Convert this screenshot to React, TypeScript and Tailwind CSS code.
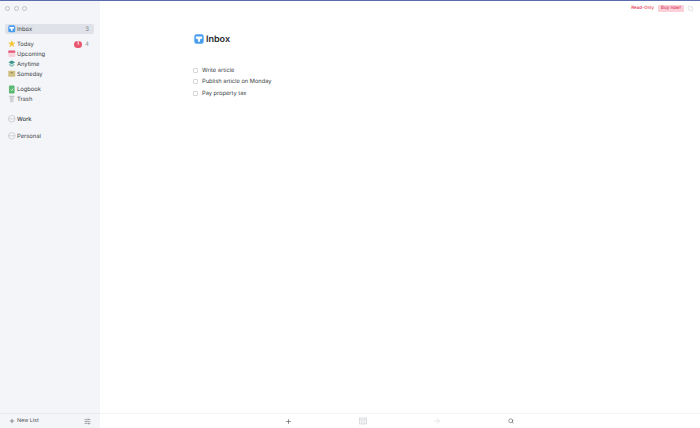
import { ArrowRight, Plus, Search, SlidersHorizontal } from 'lucide-react';

const FONT = "font-['Inter','Liberation_Sans',sans-serif]";

function InboxIcon({ size = 7.5 }: { size?: number }) {
  return (
    <svg width={size} height={size} viewBox="0 0 16 16" className="shrink-0">
      <rect x="0.5" y="0.5" width="15" height="15" rx="3.5" fill="#4a9ef0" />
      <path d="M3 4h10v3.5h-2.6L9.5 10v2.5h-3V10L5.6 7.5H3z" fill="#fff" />
    </svg>
  );
}

function TodayIcon() {
  return (
    <svg width="7.500" height="7.500" viewBox="0 0 16 16" className="shrink-0">
      <path d="M8 0.500l2.300 4.900 5.200.7-3.800 3.600 1 5.300L8 12.400l-4.700 2.600 1-5.300L.5 6.100l5.200-.7z" fill="#f6c944" />
    </svg>
  );
}

function UpcomingIcon() {
  return (
    <svg width="7.500" height="7.500" viewBox="0 0 16 16" className="shrink-0">
      <rect x="0.500" y="1" width="15" height="14" rx="2" fill="#f7d3dc" />
      <path d="M0.500 3a2 2 0 0 1 2-2h11a2 2 0 0 1 2 2v3h-15z" fill="#e8587a" />
    </svg>
  );
}

function AnytimeIcon() {
  return (
    <svg width="7.500" height="7.500" viewBox="0 0 16 16" className="shrink-0">
      <path d="M8 1l7 4-7 4-7-4z" fill="#3b958a" />
      <path d="M2.500 7.500L8 10.600l5.500-3.100V11L8 15l-5.500-4z" fill="#8cc4bc" />
    </svg>
  );
}

function SomedayIcon() {
  return (
    <svg width="7.500" height="7.500" viewBox="0 0 16 16" className="shrink-0">
      <rect x="0.500" y="1.500" width="15" height="13" rx="1.500" fill="#d0c184" />
      <rect x="5" y="5" width="6" height="1.800" rx="0.900" fill="#8f8350" />
    </svg>
  );
}

function LogbookIcon() {
  return (
    <svg width="7.500" height="9" viewBox="0 0 16 18" className="shrink-0">
      <rect x="2" y="0.500" width="12" height="17" rx="2" fill="#5bb872" />
      <path d="M5.500 9.500l2 2 3.500-4.500" stroke="#fff" strokeWidth="1.500" fill="none" />
    </svg>
  );
}

function TrashIcon() {
  return (
    <svg width="7.500" height="7.500" viewBox="0 0 16 16" className="shrink-0">
      <rect x="2" y="1.500" width="12" height="2.500" rx="1" fill="#c2c5c9" />
      <path d="M3.500 4.500h9l-1 11h-7z" fill="#d0d2d6" />
    </svg>
  );
}

function AreaIcon() {
  return (
    <svg width="7.500" height="7.500" viewBox="0 0 16 16" className="shrink-0">
      <circle cx="8" cy="8" r="7" fill="none" stroke="#b0b3b8" strokeWidth="1.100" />
      <path d="M1.500 8h13" stroke="#b0b3b8" strokeWidth="1.100" />
    </svg>
  );
}

function CalendarBox() {
  return (
    <svg width="8" height="8" viewBox="0 0 16 16">
      <rect x="1" y="2" width="14" height="12" fill="#f5f6f7" stroke="#c4c7ca" strokeWidth="1.100" />
      <path d="M1 5.500h14M5.500 5.500V14M10.500 5.500V14" stroke="#d4d6d9" strokeWidth="1" />
    </svg>
  );
}

function SidebarRow({ icon, label, active, badge, count, weight }: {
  icon: React.ReactNode;
  label: string;
  active?: boolean;
  badge?: string;
  count?: string;
  weight?: string;
}) {
  return (
    <div className={`flex h-[10px] items-center rounded-[2px] pl-[3px] pr-[5px] ${active ? 'bg-[#dfe2e8]' : ''}`}>
      <div className="flex w-[8px] justify-start">{icon}</div>
      <span className={`ml-[1px] mt-[1px] text-[5.800px] leading-none text-[#3a3e44] ${weight ?? 'font-normal'}`}>{label}</span>
      <div className="flex-1" />
      {badge && (
        <span className="mr-[3px] flex h-[7px] w-[8px] items-center justify-center rounded-full bg-[#e9566f] pt-[1px] text-[5px] font-semibold leading-none text-white">
          {badge}
        </span>
      )}
      {count && <span className="mt-[1px] text-[6px] leading-none text-[#7e8288]">{count}</span>}
    </div>
  );
}

function Task({ label }: { label: string }) {
  return (
    <div className="flex h-[11.500px] items-center">
      <div className="-ml-[1px] h-[5px] w-[5px] rounded-[1px] border-[0.500px] border-[#d3d5d8] bg-white" />
      <span className="ml-[4px] mt-[1px] text-[5.700px] leading-none text-[#3a3e44]">{label}</span>
    </div>
  );
}

export default function App() {
  return (
    <div className={`${FONT} flex h-[428px] w-[700px] flex-col overflow-hidden bg-white [text-rendering:geometricPrecision]`}>
      <div className="h-[1px] bg-[#5a6cae]" />
      <div className="flex min-h-0 flex-1">
        {/* Sidebar */}
        <aside className="flex h-full w-[100px] flex-col bg-[#f4f5f8]">
          <div className="flex gap-[3.500px] pl-[5px] pt-[4.500px]">
            <span className="h-[5px] w-[5px] rounded-full border-[0.500px] border-[#c0c2c6]" />
            <span className="h-[5px] w-[5px] rounded-full border-[0.500px] border-[#c0c2c6]" />
            <span className="h-[5px] w-[5px] rounded-full border-[0.500px] border-[#c0c2c6]" />
          </div>

          <div className="flex flex-1 flex-col pl-[5px] pr-[6px] pt-[13.500px]">
            <SidebarRow icon={<InboxIcon />} label="Inbox" active count="3" />
            <div className="mt-[5px]">
              <SidebarRow icon={<TodayIcon />} label="Today" badge="1" count="4" />
              <SidebarRow icon={<UpcomingIcon />} label="Upcoming" />
              <SidebarRow icon={<AnytimeIcon />} label="Anytime" />
              <SidebarRow icon={<SomedayIcon />} label="Someday" />
            </div>
            <div className="mt-[5px]">
              <SidebarRow icon={<LogbookIcon />} label="Logbook" />
              <SidebarRow icon={<TrashIcon />} label="Trash" />
            </div>
            <div className="mt-[10px]">
              <SidebarRow icon={<AreaIcon />} label="Work" weight="font-medium" />
            </div>
            <div className="mt-[7px]">
              <SidebarRow icon={<AreaIcon />} label="Personal" />
            </div>
          </div>

          <div className="flex h-[15px] items-center border-t-[0.500px] border-[#e9eaed] pl-[9px] pr-[9px]">
            <Plus size={6} strokeWidth={2} className="text-[#33373c]" />
            <span className="ml-[2px] mt-[2px] text-[5.300px] leading-none text-[#4e5258]">New List</span>
            <div className="flex-1" />
            <SlidersHorizontal size={7} strokeWidth={1.500} className="text-[#55595f]" />
          </div>
        </aside>

        {/* Main */}
        <main className="flex h-full flex-1 flex-col">
          <header className="flex h-[15px] items-center justify-end pr-[6px]">
            <span className="mt-[1px] text-[4.500px] font-medium leading-none text-[#e5344f]">Read-Only</span>
            <span className="ml-[4px] flex h-[7px] w-[26px] items-center justify-center rounded-[1px] bg-[#fbd0d8] pt-[1px] text-[4.500px] font-medium leading-none text-[#d93352]">
              Buy now!
            </span>
            <svg width="7" height="7" viewBox="0 0 16 16" className="ml-[3px]">
              <path d="M3 3h7v3h3v7H6v-3H3z" fill="none" stroke="#cfd1d4" strokeWidth="1.200" />
            </svg>
          </header>

          <div className="flex-1 pl-[94px] pt-[18px]">
            <div className="flex h-[10px] items-center">
              <InboxIcon size={10} />
              <h1 className="ml-[2px] text-[9px] font-semibold leading-none text-[#26292e]">Inbox</h1>
            </div>
            <div className="mt-[20.500px]">
              <Task label="Write article" />
              <Task label="Publish article on Monday" />
              <Task label="Pay property tax" />
            </div>
          </div>

          <footer className="flex h-[15px] items-center border-t-[0.500px] border-[#f3f4f5] pl-[185px]">
            <div className="flex w-[74px]"><Plus size={7} strokeWidth={1.800} className="text-[#33373c]" /></div>
            <div className="flex w-[74px]"><CalendarBox /></div>
            <div className="flex w-[75px]"><ArrowRight size={8} strokeWidth={1.200} className="text-[#c4c6ca]" /></div>
            <Search size={6} strokeWidth={2.200} className="text-[#4a4e54]" />
          </footer>
        </main>
      </div>
    </div>
  );
}
